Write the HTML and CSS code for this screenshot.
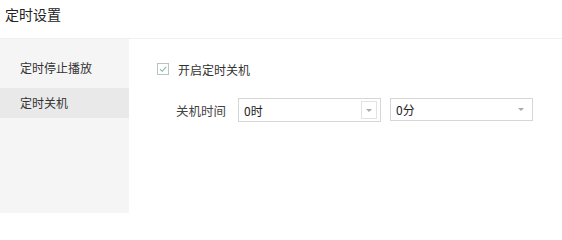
FILE: index.html
```html
<!DOCTYPE html>
<html lang="zh">
<head>
<meta charset="utf-8">
<link rel="stylesheet" href="styles.css">
</head>
<body>
<div class="page">
  <div class="header">定时设置</div>
  <div class="main">
    <div class="sidebar">
      <div class="item">定时停止播放</div>
      <div class="item active">定时关机</div>
    </div>
    <div class="content">
      <label class="check-row">
        <span class="checkbox">
          <svg width="10" height="10" viewBox="0 0 10 10"><path d="M2 5.2 L4.2 7.3 L8.2 2.8" fill="none" stroke="#7fb8a4" stroke-width="1.1"/></svg>
        </span>
        <span class="check-label">开启定时关机</span>
      </label>
      <div class="time-row">
        <span class="time-label">关机时间</span>
        <div class="select">
          <span class="value">0时</span>
          <span class="arrow-box"><span class="caret"></span></span>
        </div>
        <div class="select second">
          <span class="value">0分</span>
          <span class="caret plain"></span>
        </div>
      </div>
    </div>
  </div>
</div>
</body>
</html>
```

FILE: styles.css
```css
* { box-sizing: border-box; }
html, body { margin: 0; padding: 0; background: #fff; }
body {
  font-family: "Microsoft YaHei", "Noto Sans CJK SC", sans-serif;
  color: #333;
  width: 562px;
  height: 213px;
  overflow: hidden;
}
.page { display: flex; flex-direction: column; height: 213px; }
.header {
  height: 39px;
  padding: 4px 0 0 5px;
  font-size: 14px;
  line-height: 20px;
  color: #222;
  border-bottom: 1px solid #f0f0f0;
}
.main { display: flex; flex: 1; }
.sidebar {
  width: 129px;
  background: #f5f5f5;
  padding-top: 14px;
  display: flex;
  flex-direction: column;
  gap: 5px;
}
.item {
  height: 30px;
  line-height: 30px;
  padding-left: 20px;
  font-size: 12px;
  color: #333;
}
.item.active { background: #e9e9e9; }
.content {
  flex: 1;
  padding: 23px 0 0 28px;
}
.check-row {
  display: flex;
  align-items: center;
  height: 14px;
  gap: 9px;
}
.checkbox {
  width: 12px;
  height: 12px;
  border: 1px solid #b8c4c0;
  background: #fff;
  display: flex;
  align-items: center;
  justify-content: center;
}
.checkbox svg { display: block; }
.check-label { font-size: 12px; color: #333; }
.time-row {
  display: flex;
  align-items: center;
  margin-top: 22px;
  padding-left: 19px;
}
.time-label { font-size: 12.5px; color: #444; width: 62px; }
.select {
  width: 143px;
  height: 24px;
  border: 1px solid #d6d6d6;
  display: flex;
  align-items: center;
  justify-content: space-between;
  padding: 0 3px 0 5px;
  font-size: 12px;
  color: #222;
}
.select.second { margin-left: 9px; height: 23px; margin-top: -1px; padding-right: 8px; }
.arrow-box {
  width: 16px;
  height: 18px;
  border: 1px solid #e2e2e2;
  display: flex;
  align-items: center;
  justify-content: center;
}
.caret {
  width: 0;
  height: 0;
  border-left: 3px solid transparent;
  border-right: 3px solid transparent;
  border-top: 3px solid #aaa;
}
```
